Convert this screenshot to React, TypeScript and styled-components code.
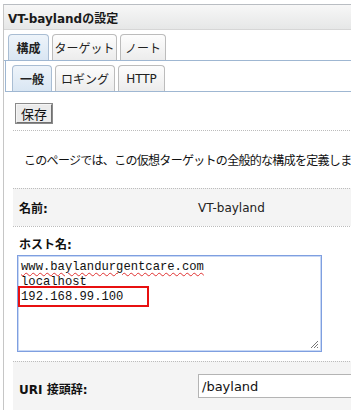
import React from 'react';
import styled, { createGlobalStyle } from 'styled-components';

const Global = createGlobalStyle`
  html, body {
    margin: 0;
    padding: 0;
    background: #ffffff;
    overflow: hidden;
  }
  body {
    font-family: "DejaVu Sans", "Noto Sans CJK JP", sans-serif;
    font-size: 12px;
    color: #111;
  }
`;

const Page = styled.div`
  width: 351px;
  height: 410px;
  overflow: hidden;
  padding: 4px 0 0 3px;
  box-sizing: border-box;
`;

const Panel = styled.div`
  border-top: 1px solid #b9bdc2;
  border-left: 1px solid #c6c6c6;
  height: 100%;
  width: 400px;
`;

const TitleBar = styled.div`
  height: 24px;
  display: flex;
  align-items: center;
  padding-left: 4px;
  font-weight: bold;
  font-size: 12px;
  color: #1a1a1a;
  background: linear-gradient(#f7f7f7, #e6e7e7);
  border-bottom: 1px solid #d6d6d6;
`;

const TabRow = styled.div<{ $inner?: boolean }>`
  display: flex;
  gap: 3px;
  padding: ${p => (p.$inner ? '4px 0 0 6px' : '4px 0 0 4px')};
  border-bottom: 1px solid #9fb7d2;
`;

const Tab = styled.div<{ $active?: boolean; $w: number }>`
  width: ${p => p.$w}px;
  height: 26px;
  box-sizing: border-box;
  display: flex;
  align-items: center;
  justify-content: center;
  border: 1px solid ${p => (p.$active ? '#a9bdd3' : '#bcbcbc')};
  border-bottom: none;
  border-radius: 4px 4px 0 0;
  background: ${p =>
    p.$active
      ? 'linear-gradient(#eef4fa, #d9e6f3)'
      : 'linear-gradient(#fdfdfd, #ececec)'};
  font-weight: ${p => (p.$active ? 'bold' : 'normal')};
  font-size: 12px;
  color: #222;
`;

const TabBody = styled.div`
  margin-left: 1px;
  border-left: 1px solid #9fb7d2;
`;

const Content = styled.div`
  padding: 12px 0 0 9px;
`;

const SaveButton = styled.button`
  margin-left: 3px;
  margin-bottom: 7px;
  height: 19px;
  width: 36px;
  padding: 0;
  font-family: "DejaVu Sans", "Noto Sans CJK JP", sans-serif;
  font-size: 13px;
  color: #111;
  background: #ebebeb;
  border: 1px solid;
  border-color: #f5f5f5 #707070 #707070 #f5f5f5;
  box-shadow: 0 0 0 1px #8a8a8a;
  display: flex;
  align-items: center;
  justify-content: center;
`;

const Row = styled.div<{ $shade?: boolean; $h: number }>`
  height: ${p => p.$h}px;
  box-sizing: border-box;
  border-top: 1px dotted #bcbcbc;
  background: ${p => (p.$shade ? '#f4f4f4' : '#ffffff')};
  display: grid;
  grid-template-columns: 185px 1fr;
  align-items: center;
  white-space: nowrap;
`;

const TopRow = styled(Row)`
  align-items: start;
  padding-top: 12px;
`;

const Description = styled.div`
  grid-column: 1 / 3;
  padding-left: 11px;
  font-size: 12px;
  letter-spacing: -0.7px;
  font-family: "Noto Sans CJK JP", sans-serif;
  color: #111;
`;

const Label = styled.div`
  padding-left: 6px;
  font-weight: bold;
  font-size: 12px;
  color: #111;
`;

const Value = styled.div`
  font-size: 12px;
  color: #222;
`;

const HostBlock = styled.div`
  grid-column: 1 / 3;
  align-self: start;
  padding: 8px 0 0 4px;
`;

const HostLabel = styled(Label)`
  padding-left: 2px;
  margin-bottom: 3px;
`;

const TextArea = styled.div`
  position: relative;
  width: 305px;
  height: 97px;
  box-sizing: border-box;
  border: 1px solid #7f9fe0;
  box-shadow: inset 0 0 0 1px #c8d8f5;
  padding: 4px 0 0 3px;
  font-family: "Liberation Mono", "DejaVu Sans Mono", monospace;
  font-size: 12.2px;
  line-height: 15px;
  color: #111;
  background: #fff;
`;

const Line = styled.div<{ $misspelt?: boolean }>`
  text-decoration: ${p => (p.$misspelt ? 'underline wavy #e03030' : 'none')};
  text-decoration-thickness: 1px;
  text-underline-offset: 2px;
`;

const Highlight = styled.div`
  position: absolute;
  left: 0;
  top: 30px;
  width: 131px;
  height: 21px;
  box-sizing: border-box;
  border: 2px solid #e81010;
`;

const Grip = styled.svg`
  position: absolute;
  right: 2px;
  bottom: 2px;
`;

const UriInput = styled.div`
  height: 24px;
  box-sizing: border-box;
  border: 1px solid #b4b4b4;
  background: #fff;
  display: flex;
  align-items: center;
  padding-left: 3px;
  font-size: 13px;
  color: #111;
`;

const UriLabel = styled(Label)`
  padding-top: 6px;
`;

export default function App() {
  return (
    <>
      <Global />
      <Page>
        <Panel>
          <TitleBar>VT-baylandの設定</TitleBar>
          <TabRow>
            <Tab $active $w={41}>構成</Tab>
            <Tab $w={65}>ターゲット</Tab>
            <Tab $w={46}>ノート</Tab>
          </TabRow>
          <TabBody>
            <TabRow $inner>
              <Tab $active $w={40}>一般</Tab>
              <Tab $w={60}>ロギング</Tab>
              <Tab $w={47}>HTTP</Tab>
            </TabRow>
          </TabBody>
          <Content>
            <SaveButton>保存</SaveButton>
            <Row $h={58}>
              <Description>このページでは、この仮想ターゲットの全般的な構成を定義します。</Description>
            </Row>
            <Row $shade $h={38}>
              <Label>名前:</Label>
              <Value>VT-bayland</Value>
            </Row>
            <Row $h={135}>
              <HostBlock>
                <HostLabel>ホスト名:</HostLabel>
                <TextArea>
                  <Line $misspelt>www.baylandurgentcare.com</Line>
                  <Line>localhost</Line>
                  <Line>192.168.99.100</Line>
                  <Highlight />
                  <Grip width="10" height="10" viewBox="0 0 10 10">
                    <path d="M9 2 L2 9 M9 5 L5 9 M9 8 L8 9" stroke="#777" strokeWidth="1" />
                  </Grip>
                </TextArea>
              </HostBlock>
            </Row>
            <TopRow $shade $h={60}>
              <UriLabel>URI 接頭辞:</UriLabel>
              <UriInput>/bayland</UriInput>
            </TopRow>
          </Content>
        </Panel>
      </Page>
    </>
  );
}
